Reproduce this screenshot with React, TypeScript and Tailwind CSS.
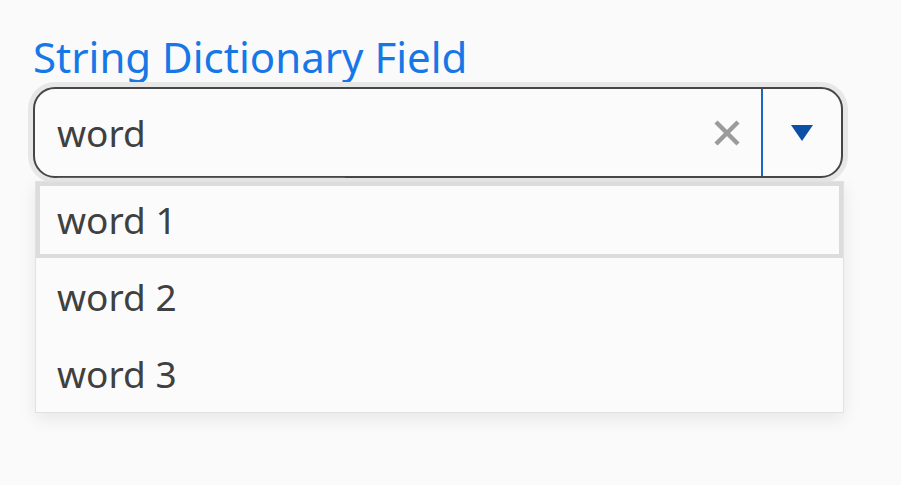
import { useState } from "react";

const options = ["word 1", "word 2", "word 3"];

function ClearIcon() {
  return (
    <svg width="28" height="28" viewBox="0 0 28 28" fill="none" stroke="#9b9b9b" strokeWidth="4.5">
      <path d="M3 3l22 22M25 3L3 25" />
    </svg>
  );
}

function CaretIcon() {
  return (
    <svg width="22" height="16" viewBox="0 0 22 16">
      <path d="M0 0h22L11 16z" fill="#0b4fa6" />
    </svg>
  );
}

export default function App() {
  const [value, setValue] = useState("word");
  const [active] = useState(0);

  return (
    <div
      className="min-h-screen bg-[#fafafa] pl-[33px] pt-[33px]"
      style={{ fontFamily: '"Noto Sans", "Open Sans", sans-serif' }}
    >
      <label className="block text-[42px] leading-[48px] text-[#1677e6]">String Dictionary Field</label>

      <div className="relative mt-[6px] w-[810px]">
        <div className="flex h-[91px] items-stretch rounded-[22px] border-2 border-[#464646] bg-[#fbfbfb] shadow-[0_0_0_5px_#e7e7e7]">
          <input
            value={value}
            onChange={(e) => setValue(e.target.value)}
            className="min-w-0 flex-1 bg-transparent pl-[22px] text-[37px] text-[#404040] outline-none"
          />
          <button className="flex w-[46px] items-center justify-start pl-[2px]" onClick={() => setValue("")}>
            <ClearIcon />
          </button>
          <div className="ml-[4px] w-[2px] bg-[#1b68c4]" />
          <button className="flex w-[78px] items-center justify-center rounded-r-[20px]">
            <CaretIcon />
          </button>
        </div>
        <div className="absolute left-[24px] top-[90px] h-[1px] w-[288px] bg-[#1d6fcf]" />

        <ul className="absolute left-[2px] top-[94px] w-[809px] border border-[#e2e2e2] bg-[#fbfbfb] shadow-[0_6px_16px_rgba(0,0,0,0.08)]">
          {options.map((opt, i) => (
            <li
              key={opt}
              className={
                i === active
                  ? "flex h-[76px] items-center border-4 border-[#dcdcdc] pl-[17px] text-[37px] text-[#404040]"
                  : "flex h-[77px] items-center pl-[21px] text-[37px] text-[#404040]"
              }
            >
              {opt}
            </li>
          ))}
        </ul>
      </div>
    </div>
  );
}
